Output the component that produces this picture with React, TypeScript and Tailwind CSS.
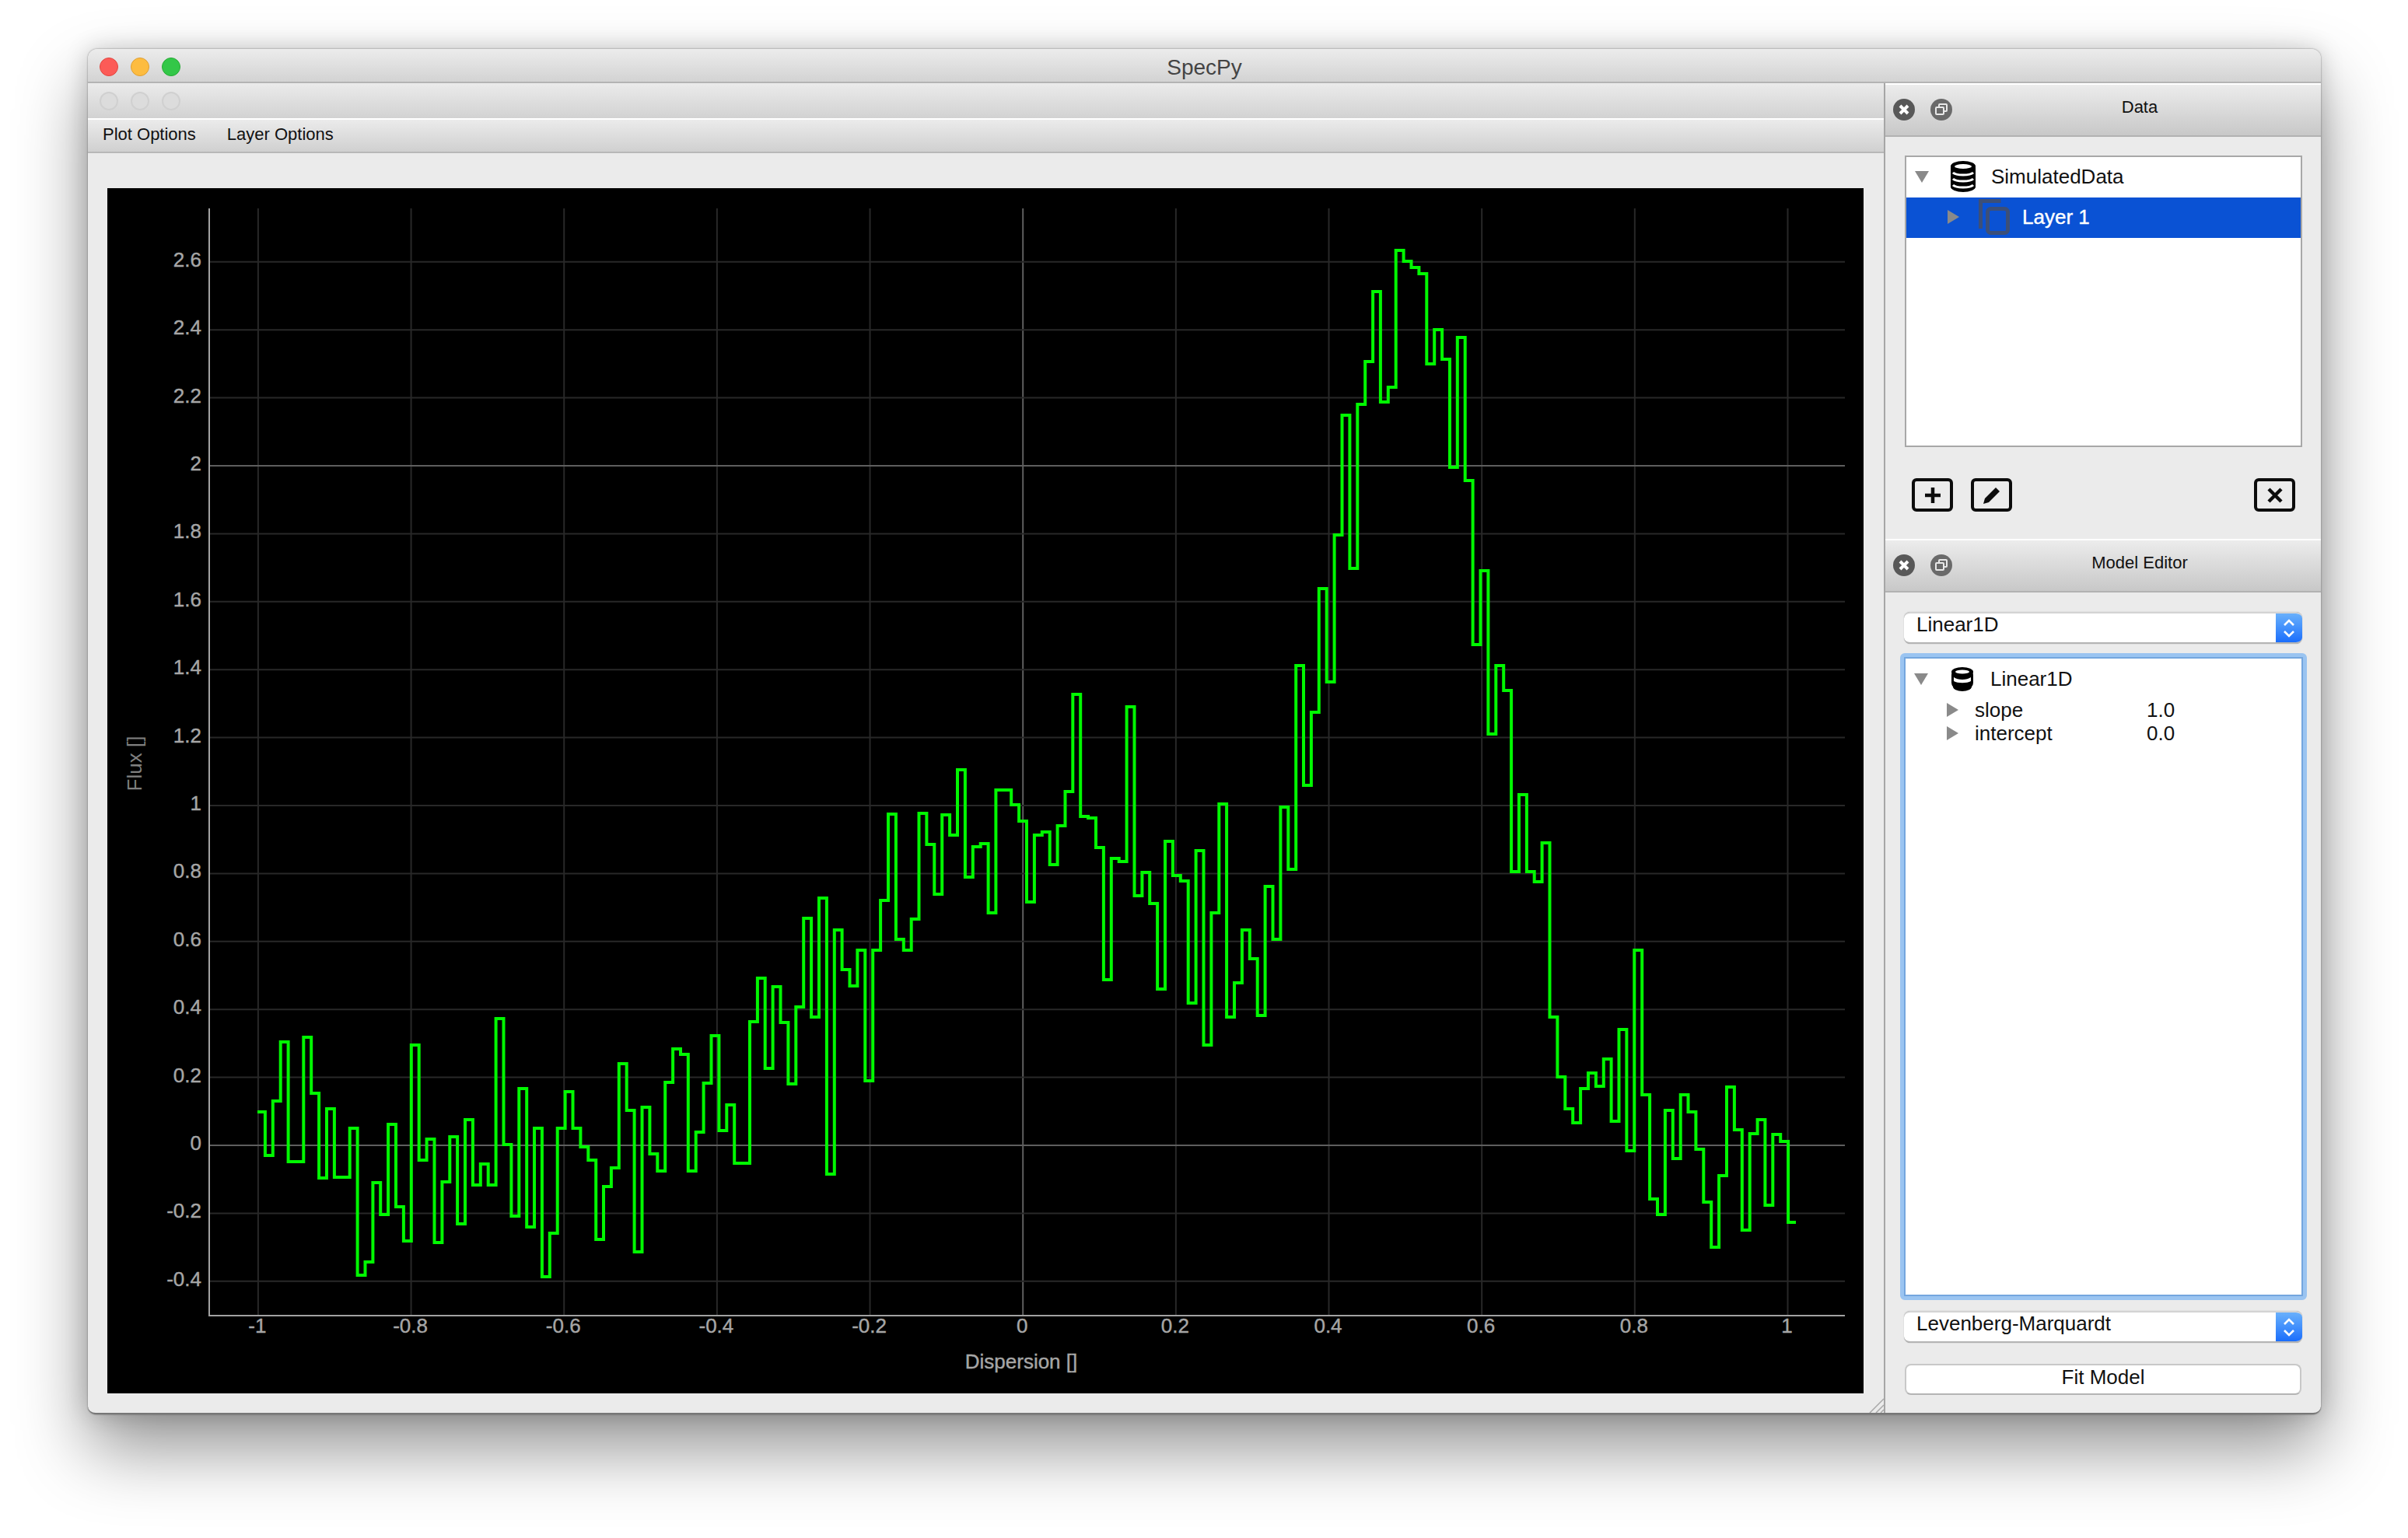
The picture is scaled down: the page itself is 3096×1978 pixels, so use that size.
import React from 'react';

// flux trace as pixel rows, one entry per bin
const trace = [
  1430, 1486, 1416, 1340, 1494, 1494, 1334, 1406, 1515, 1426, 1514, 1514, 1451, 1640, 1623, 1521, 1562, 1446, 1552, 1596,
  1344, 1492, 1465, 1598, 1520, 1462, 1574, 1440, 1524, 1497, 1524, 1310, 1472, 1564, 1400, 1578, 1451, 1642, 1586, 1451,
  1404, 1451, 1475, 1492, 1594, 1526, 1502, 1368, 1428, 1610, 1424, 1484, 1506, 1392, 1349, 1356, 1506, 1456, 1393, 1332,
  1454, 1421, 1496, 1496, 1314, 1258, 1374, 1269, 1315, 1394, 1295, 1181, 1308, 1155, 1510, 1196, 1247, 1268, 1222, 1390,
  1222, 1158, 1047, 1208, 1222, 1182, 1046, 1086, 1150, 1048, 1074, 990, 1128, 1089, 1085, 1174, 1016, 1016, 1035, 1056,
  1160, 1074, 1070, 1112, 1062, 1018, 893, 1050, 1052, 1090, 1260, 1104, 1108, 909, 1152, 1122, 1162, 1272, 1082, 1126,
  1133, 1290, 1094, 1344, 1174, 1034, 1308, 1264, 1196, 1233, 1306, 1140, 1208, 1038, 1118, 856, 1010, 916, 757, 877,
  688, 534, 731, 520, 465, 375, 517, 498, 322, 336, 344, 352, 468, 424, 462, 601, 434, 618, 829, 734,
  944, 856, 888, 1121, 1022, 1121, 1134, 1084, 1308, 1385, 1426, 1444, 1400, 1380, 1397, 1362, 1442, 1324, 1480, 1222,
  1408, 1542, 1562, 1428, 1490, 1408, 1430, 1478, 1546, 1604, 1512, 1398, 1453, 1582, 1458, 1440, 1550, 1459, 1468, 1572,
];

const X0 = 1315.2;
const XU = 983.3;
const Y0 = 1473;
const YU = 437;

const xTicks = [-1, -0.8, -0.6, -0.4, -0.2, 0, 0.2, 0.4, 0.6, 0.8, 1];
const yTicks = [2.6, 2.4, 2.2, 2, 1.8, 1.6, 1.4, 1.2, 1, 0.8, 0.6, 0.4, 0.2, 0, -0.2, -0.4];

const tracePoints = () => {
  const start = 331;
  const step = (2309 - start) / trace.length;
  const pts: string[] = [];
  trace.forEach((y, i) => {
    pts.push(`${(start + i * step).toFixed(1)},${y}`);
    pts.push(`${(start + (i + 1) * step).toFixed(1)},${y}`);
  });
  return pts.join(' ');
};

const Plot = () => (
  <svg width="2258" height="1550" viewBox="138 242 2258 1550" className="block bg-black">
    {xTicks.map((v) => (
      <line key={v} x1={X0 + v * XU} x2={X0 + v * XU} y1={268} y2={1692} stroke={v === 0 ? '#5e5e5e' : '#282828'} strokeWidth="2" />
    ))}
    {yTicks.map((v) => (
      <line key={v} x1={269} x2={2372} y1={Y0 - v * YU} y2={Y0 - v * YU} stroke={v === 0 || v === 2 ? '#5e5e5e' : '#282828'} strokeWidth="2" />
    ))}
    <polyline points="269,268 269,1692 2372,1692" fill="none" stroke="#a2a2a2" strokeWidth="2" />
    <polyline points={tracePoints()} fill="none" stroke="#00f800" strokeWidth="4" />
    {yTicks.map((v) => (
      <text key={v} x={259} y={Y0 - v * YU + 6} textAnchor="end" fontSize="26" fill="#a6a6a6" stroke="#a6a6a6" strokeWidth="0.4">{v}</text>
    ))}
    {xTicks.map((v) => (
      <text key={v} x={X0 + v * XU - 1} y={1714} textAnchor="middle" fontSize="26" fill="#a6a6a6" stroke="#a6a6a6" strokeWidth="0.4">{v}</text>
    ))}
    <text x={1313} y={1760} textAnchor="middle" fontSize="26" fill="#a6a6a6" stroke="#a6a6a6" strokeWidth="0.4">Dispersion []</text>
    <text x={182} y={982} textAnchor="middle" fontSize="26" fill="#808080" transform="rotate(-90 182 982)">Flux []</text>
  </svg>
);

const DownArrow = () => (
  <svg width="18" height="15" viewBox="0 0 18 15" className="shrink-0"><polygon points="0,0 18,0 9,15" fill="#8a8a8a" /></svg>
);

const RightArrow = () => (
  <svg width="15" height="18" viewBox="0 0 15 18" className="shrink-0"><polygon points="0,0 15,9 0,18" fill="#8a8a8a" /></svg>
);

const DatabaseIcon = () => (
  <svg width="32" height="40" viewBox="0 0 32 40" className="shrink-0">
    <rect x="0" y="2" width="32" height="36" rx="7" fill="#000" />
    <ellipse cx="16" cy="7" rx="16" ry="7" fill="#000" />
    <ellipse cx="16" cy="33" rx="16" ry="7" fill="#000" />
    <ellipse cx="16" cy="7" rx="11" ry="3" fill="#fff" />
    <path d="M3 15c4 4 22 4 26 0M3 23c4 4 22 4 26 0M3 31c4 4 22 4 26 0" fill="none" stroke="#fff" strokeWidth="3" />
  </svg>
);

const ModelIcon = () => (
  <svg width="28" height="31" viewBox="0 0 28 31" className="shrink-0">
    <rect x="0" y="2" width="28" height="26" rx="8" fill="#000" />
    <ellipse cx="14" cy="25" rx="12" ry="6" fill="#000" />
    <ellipse cx="14" cy="6" rx="14" ry="6" fill="#000" />
    <ellipse cx="14" cy="6" rx="9" ry="2.4" fill="#fff" />
    <path d="M3 13c5 4 17 4 22 0v5c-5 3-17 3-22 0z" fill="#fff" />
  </svg>
);

const LayerIcon = () => (
  <svg width="40" height="46" viewBox="0 0 40 46" className="shrink-0">
    <path d="M2.5 38V2.5h26" fill="none" stroke="#3c4f78" strokeWidth="5" />
    <rect x="11.5" y="12.5" width="26" height="31" rx="4" fill="none" stroke="#3c4f78" strokeWidth="5" />
  </svg>
);

const DockButtons = () => (
  <div className="flex items-center gap-[20px] mb-[2px]">
    <svg width="28" height="30" viewBox="0 0 28 30">
      <circle cx="14" cy="15" r="14" fill="#585858" />
      <path d="M9 10l10 10M19 10L9 20" stroke="#fff" strokeWidth="4" />
    </svg>
    <svg width="28" height="30" viewBox="0 0 28 30">
      <circle cx="14" cy="15" r="14" fill="#6a6a6a" />
      <rect x="11" y="8" width="10" height="9" rx="1" fill="none" stroke="#e8e8e8" strokeWidth="2" />
      <rect x="7" y="12" width="10" height="9" rx="1" fill="#6a6a6a" stroke="#e8e8e8" strokeWidth="2" />
    </svg>
  </div>
);

const DockHeader = ({ title }: { title: string }) => (
  <div className="relative h-[69px] flex items-center pl-[10px] shrink-0 border-t-2 border-b-2 border-t-white border-b-[#b2b2b2] bg-gradient-to-b from-[#ececec] to-[#c8c8c8]">
    <DockButtons />
    <div className="absolute inset-x-0 top-[16px] pl-[94px] text-center text-[22px] leading-[26px] text-[#111]">{title}</div>
  </div>
);

const Combo = ({ label }: { label: string }) => (
  <div className="h-[41px] ml-[24px] mr-[24px] flex rounded-[8px] bg-white border-t-2 border-t-[#d4d4d4] border-b-2 border-b-[#b4b4b4] overflow-hidden shadow-[0_0_1px_rgba(0,0,0,0.4)]">
    <div className="flex-1 pl-[16px] text-[26px] leading-[28px] text-[#111]">{label}</div>
    <div className="w-[34px] -my-[2px] flex items-center justify-center bg-gradient-to-b from-[#6db3fb] to-[#1569fb]">
      <svg width="18" height="28" viewBox="0 0 18 28" fill="none" stroke="#fff" strokeWidth="2.6">
        <path d="M3 10l6-6 6 6M3 18l6 6 6-6" />
      </svg>
    </div>
  </div>
);

const ToolButton = ({ children, className }: { children: React.ReactNode; className?: string }) => (
  <div className={`w-[53px] h-[43px] rounded-[6px] border-[4px] border-[#0c0c0c] flex items-center justify-center ${className ?? ''}`}>
    <svg width="30" height="30" viewBox="0 0 30 30">{children}</svg>
  </div>
);

export default function App() {
  return (
    <div className="w-[3096px] h-[1978px] bg-white pt-[63px] pl-[113px] overflow-hidden font-['Liberation_Sans',Arial,sans-serif]">
      <div className="w-[2871px] h-[1756px] flex flex-col rounded-t-[12px] rounded-b-[10px] overflow-hidden bg-[#ebebeb] border-b-2 border-b-[#777] shadow-[0_45px_90px_rgba(0,0,0,0.42),0_0_30px_rgba(0,0,0,0.18),0_0_2px_rgba(0,0,0,0.5)]">
        {/* Window title bar */}
        <div className="relative h-[44px] shrink-0 flex items-center gap-[16px] pl-[15px] pt-[3px] bg-gradient-to-b from-[#ececec] to-[#d3d3d3] border-b-2 border-b-[#b4b4b4]">
          <span className="w-[24px] h-[24px] rounded-full bg-[#fc5b57] border border-[#e2463f]" />
          <span className="w-[24px] h-[24px] rounded-full bg-[#fdbc40] border border-[#de9f34]" />
          <span className="w-[24px] h-[24px] rounded-full bg-[#33c748] border border-[#27aa35]" />
          <div className="absolute inset-x-0 top-[9px] text-center text-[28px] leading-[30px] text-[#444]">SpecPy</div>
        </div>

        <div className="flex-1 flex min-h-0">
          {/* Plot side */}
          <div className="w-[2311px] flex flex-col border-r-2 border-r-[#a6a6a6]">
            <div className="h-[45px] shrink-0 flex items-center gap-[16px] pl-[15px] bg-gradient-to-b from-[#ebebeb] to-[#d2d2d2]">
              <span className="w-[24px] h-[24px] rounded-full bg-[#dcdcdc] border-2 border-[#d0d0d0]" />
              <span className="w-[24px] h-[24px] rounded-full bg-[#dcdcdc] border-2 border-[#d0d0d0]" />
              <span className="w-[24px] h-[24px] rounded-full bg-[#dcdcdc] border-2 border-[#d0d0d0]" />
            </div>
            <div className="h-[45px] shrink-0 flex items-center gap-[40px] pl-[19px] pb-[5px] text-[22px] text-[#111] border-t-2 border-t-white border-b-2 border-b-[#b8b8b8] bg-gradient-to-b from-[#ebebeb] to-[#d0d0d0]">
              <span>Plot Options</span>
              <span>Layer Options</span>
            </div>
            <div className="relative flex-1 pt-[45px] pl-[25px]">
              <Plot />
              <svg width="20" height="20" viewBox="0 0 20 20" className="absolute right-0 bottom-0">
                <path d="M2 20L20 2M10 20l10-10M16 20l4-4" stroke="#a8a8a8" strokeWidth="1.5" />
              </svg>
            </div>
          </div>

          {/* Dock side */}
          <div className="flex-1 flex flex-col">
            <DockHeader title="Data" />
            <div className="h-[517px] shrink-0 flex flex-col pl-[25px] pr-[24px] pt-[24px]">
              <div className="h-[375px] w-[511px] shrink-0 bg-white border-2 border-[#a8a8a8]">
                <div className="h-[52px] flex items-center pl-[11px] pb-[2px] text-[26px] text-[#111]">
                  <DownArrow />
                  <span className="ml-[28px]"><DatabaseIcon /></span>
                  <span className="ml-[20px]">SimulatedData</span>
                </div>
                <div className="h-[52px] flex items-center pl-[53px] pb-[2px] text-[26px] text-white bg-[#0a52d4]">
                  <RightArrow />
                  <span className="ml-[25px]"><LayerIcon /></span>
                  <span className="ml-[16px] [-webkit-text-stroke:0.4px_white]">Layer 1</span>
                </div>
              </div>
              <div className="flex mt-[40px] pl-[9px] w-[502px]">
                <ToolButton>
                  <path d="M15 5v20M5 15h20" stroke="#0c0c0c" strokeWidth="4.5" />
                </ToolButton>
                <ToolButton className="ml-[23px]">
                  <path d="M4 26l2-7L20 5l5 5-14 14z" fill="#0c0c0c" />
                </ToolButton>
                <ToolButton className="ml-auto">
                  <path d="M7 7l16 16M23 7L7 23" stroke="#0c0c0c" strokeWidth="4.5" />
                </ToolButton>
              </div>
            </div>
            <DockHeader title="Model Editor" />
            <div className="flex-1 flex flex-col pt-[25px]">
              <Combo label="Linear1D" />
              <div className="mt-[12px] ml-[19px] h-[832px] w-[523px] shrink-0 rounded-[6px] border-[5px] border-[#9ac4f1]">
                <div className="h-full border-2 border-[#74a6de] bg-white pt-[9px] text-[26px] leading-[30px] text-[#111]">
                  <div className="h-[34px] flex items-center pl-[11px]">
                    <DownArrow />
                    <span className="ml-[30px]"><ModelIcon /></span>
                    <span className="ml-[22px]">Linear1D</span>
                  </div>
                  <div className="h-[30px] mt-[8px] flex items-center pl-[53px]">
                    <RightArrow />
                    <span className="ml-[21px] w-[221px]">slope</span>
                    <span>1.0</span>
                  </div>
                  <div className="h-[30px] flex items-center pl-[53px]">
                    <RightArrow />
                    <span className="ml-[21px] w-[221px]">intercept</span>
                    <span>0.0</span>
                  </div>
                </div>
              </div>
              <div className="mt-[14px]"><Combo label="Levenberg-Marquardt" /></div>
              <div className="mt-[27px] ml-[25px] w-[510px] h-[40px] rounded-[8px] bg-white border-2 border-[#c8c8c8] border-b-[#b4b4b4] text-center text-[26px] leading-[30px] text-[#111]">
                Fit Model
              </div>
            </div>
          </div>
        </div>
      </div>
    </div>
  );
}
